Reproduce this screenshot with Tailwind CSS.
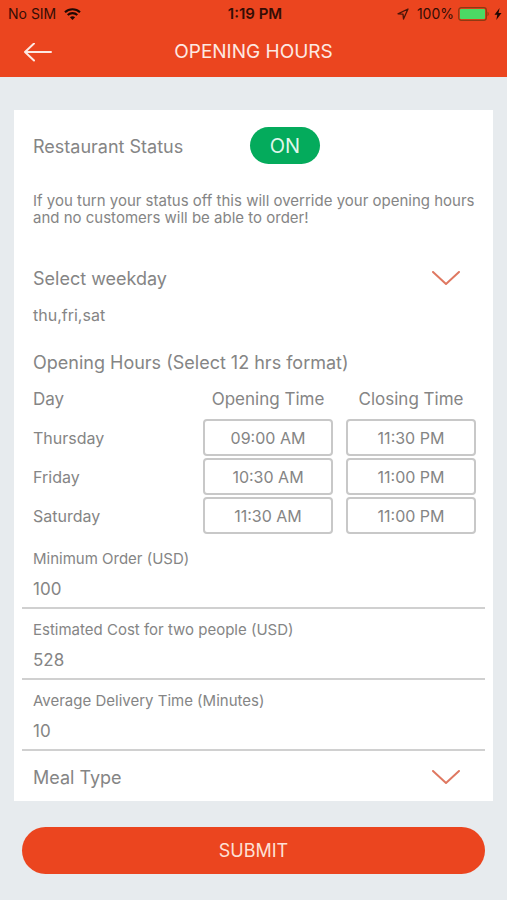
<!DOCTYPE html>
<html lang="en">
<head>
<meta charset="utf-8">
<meta name="viewport" content="width=device-width, initial-scale=1">
<title>Opening Hours</title>
<script src="https://cdn.jsdelivr.net/npm/@tailwindcss/browser@4"></script>
</head>
<body class="min-h-screen bg-[#e7ebee] font-['Inter',sans-serif] text-[#858585]">
<header class="bg-[#eb451f]">
  <div class="grid grid-cols-[1fr_auto_1fr] items-center h-7 pl-2 pr-[5px] text-sm text-[#340d05]">
    <div class="flex items-center gap-2">
      <span>No SIM</span>
      <svg class="w-[17px] h-3" viewBox="0 0 17 12" fill="none" stroke="#1d0804" stroke-width="2.1" aria-hidden="true">
        <path d="M1 4.3C5.2.3 11.8.3 16 4.3M3.7 7.1c2.7-2.6 6.9-2.6 9.6 0"/>
        <path d="M8.500 12L5.900 9.300c1.500-1.300 3.700-1.300 5.200 0z" fill="#1d0804" stroke="none"/>
      </svg>
    </div>
    <span class="text-[15px] font-semibold">1:19 PM</span>
    <div class="flex items-center justify-end">
      <svg class="w-3 h-3 mr-2" viewBox="0 0 12 12" fill="none" stroke="#4a1408" stroke-width="1.300" stroke-linejoin="round" aria-hidden="true">
        <path d="M11 1L1 5.800l5 .3.5 4.900z"/>
      </svg>
      <span>100%</span>
      <svg class="w-8 h-3.5 ml-1" viewBox="0 0 32 14" aria-hidden="true">
        <rect x=".7" y=".7" width="27.600" height="12.600" rx="2.500" fill="none" stroke="#8e3a12" stroke-width="1.300"/>
        <rect x="2" y="2" width="25" height="10" rx="1" fill="#4cd964"/>
        <path d="M29.500 4.800c1.600.4 1.600 4 0 4.400z" fill="#8e3a12"/>
      </svg>
      <svg class="w-2 h-3 ml-1" viewBox="0 0 8 12" fill="#1d0804" aria-hidden="true"><path d="M5.600 0L.5 6.700h2.800L2.300 12l5.200-7H4.500z"/></svg>
    </div>
  </div>
  <div class="grid grid-cols-[1fr_auto_1fr] items-center h-[49px] px-6 text-[#fde9e3]">
    <button type="button" aria-label="Back" class="w-7">
      <svg class="block w-7 h-5" viewBox="0 0 28 20" fill="none" stroke="#fde9e3" stroke-width="2" stroke-linecap="round" stroke-linejoin="round" aria-hidden="true"><path d="M10 .5L1 9l9 8.500M1 9h26"/></svg>
    </button>
    <h1 class="text-[19px]">OPENING HOURS</h1>
  </div>
</header>
<main class="px-[14px] pt-[33px] pb-6">
  <form>
    <div class="bg-white pt-[17px] pb-[11px]">
      <div class="pl-[19px] pr-[17px]">
        <div class="flex items-center">
          <span id="status" class="w-[217px] pt-[2px] text-lg">Restaurant Status</span>
          <button type="button" role="switch" aria-checked="true" aria-labelledby="status" class="w-[70px] h-[37px] rounded-full bg-[#04ab5c] text-xl text-[#dff6ea]">ON</button>
        </div>
        <p class="mt-7 text-[15px] leading-[17px]">If you turn your status off this will override your opening hours and no customers will be able to order!</p>
        <div class="relative mt-[41px] h-6">
          <select aria-label="Select weekday" class="appearance-none w-full h-6 text-lg leading-6"><option>Select weekday</option></select>
          <svg class="absolute right-4 top-1 w-7 h-[14px] pointer-events-none" viewBox="0 0 28 14" fill="none" stroke="#df7861" stroke-width="2" stroke-linecap="round" stroke-linejoin="round" aria-hidden="true"><path d="M1 1l13 12L27 1"/></svg>
        </div>
        <p class="mt-3 text-base">thu,fri,sat</p>
        <h2 class="mt-6 text-lg leading-6">Opening Hours (Select 12 hrs format)</h2>
        <table class="mt-[6px] w-full table-fixed border-collapse text-base">
          <colgroup><col><col class="w-[143px]"><col class="w-[143px]"></colgroup>
          <thead>
            <tr class="h-[37px] text-[17px]"><th class="p-0 text-left font-normal">Day</th><th class="p-0 pl-[13px] font-normal">Opening Time</th><th class="p-0 pl-[13px] font-normal">Closing Time</th></tr>
          </thead>
          <tbody>
            <tr class="h-[39px]"><th scope="row" class="p-0 text-left font-normal">Thursday</th><td class="p-0 pl-[13px]"><button type="button" class="block w-full h-[37px] rounded-sm border-2 border-[#c8c8c8]">09:00 AM</button></td><td class="p-0 pl-[13px]"><button type="button" class="block w-full h-[37px] rounded-sm border-2 border-[#c8c8c8]">11:30 PM</button></td></tr>
            <tr class="h-[39px]"><th scope="row" class="p-0 text-left font-normal">Friday</th><td class="p-0 pl-[13px]"><button type="button" class="block w-full h-[37px] rounded-sm border-2 border-[#c8c8c8]">10:30 AM</button></td><td class="p-0 pl-[13px]"><button type="button" class="block w-full h-[37px] rounded-sm border-2 border-[#c8c8c8]">11:00 PM</button></td></tr>
            <tr class="h-[39px]"><th scope="row" class="p-0 text-left font-normal">Saturday</th><td class="p-0 pl-[13px]"><button type="button" class="block w-full h-[37px] rounded-sm border-2 border-[#c8c8c8]">11:30 AM</button></td><td class="p-0 pl-[13px]"><button type="button" class="block w-full h-[37px] rounded-sm border-2 border-[#c8c8c8]">11:00 PM</button></td></tr>
          </tbody>
        </table>
      </div>
      <div class="mt-[3px] px-2">
        <div class="border-b-2 border-[#d0d0d0] px-[11px] pt-[11px] pb-[5px]">
          <label for="min-order" class="block text-[15px] leading-5">Minimum Order (USD)</label>
          <input id="min-order" type="text" inputmode="numeric" value="100" class="block mt-[9px] w-full h-6 text-[17px]">
        </div>
        <div class="border-b-2 border-[#d0d0d0] px-[11px] pt-[11px] pb-[5px]">
          <label for="cost" class="block text-[15px] leading-5">Estimated Cost for two people (USD)</label>
          <input id="cost" type="text" inputmode="numeric" value="528" class="block mt-[9px] w-full h-6 text-[17px]">
        </div>
        <div class="border-b-2 border-[#d0d0d0] px-[11px] pt-[11px] pb-[5px]">
          <label for="delivery" class="block text-[15px] leading-5">Average Delivery Time (Minutes)</label>
          <input id="delivery" type="text" inputmode="numeric" value="10" class="block mt-[9px] w-full h-6 text-[17px]">
        </div>
      </div>
      <div class="pl-[19px] pr-[17px]">
        <div class="relative mt-[15px] h-6">
          <select aria-label="Meal Type" class="appearance-none w-full h-6 text-lg leading-6"><option>Meal Type</option></select>
          <svg class="absolute right-4 top-1 w-7 h-[14px] pointer-events-none" viewBox="0 0 28 14" fill="none" stroke="#df7861" stroke-width="2" stroke-linecap="round" stroke-linejoin="round" aria-hidden="true"><path d="M1 1l13 12L27 1"/></svg>
        </div>
      </div>
    </div>
    <div class="mt-[26px] px-2">
      <button type="submit" class="block w-full h-[47px] rounded-full bg-[#eb451f] text-lg text-[#fde0d6]">SUBMIT</button>
    </div>
  </form>
</main>
</body>
</html>
